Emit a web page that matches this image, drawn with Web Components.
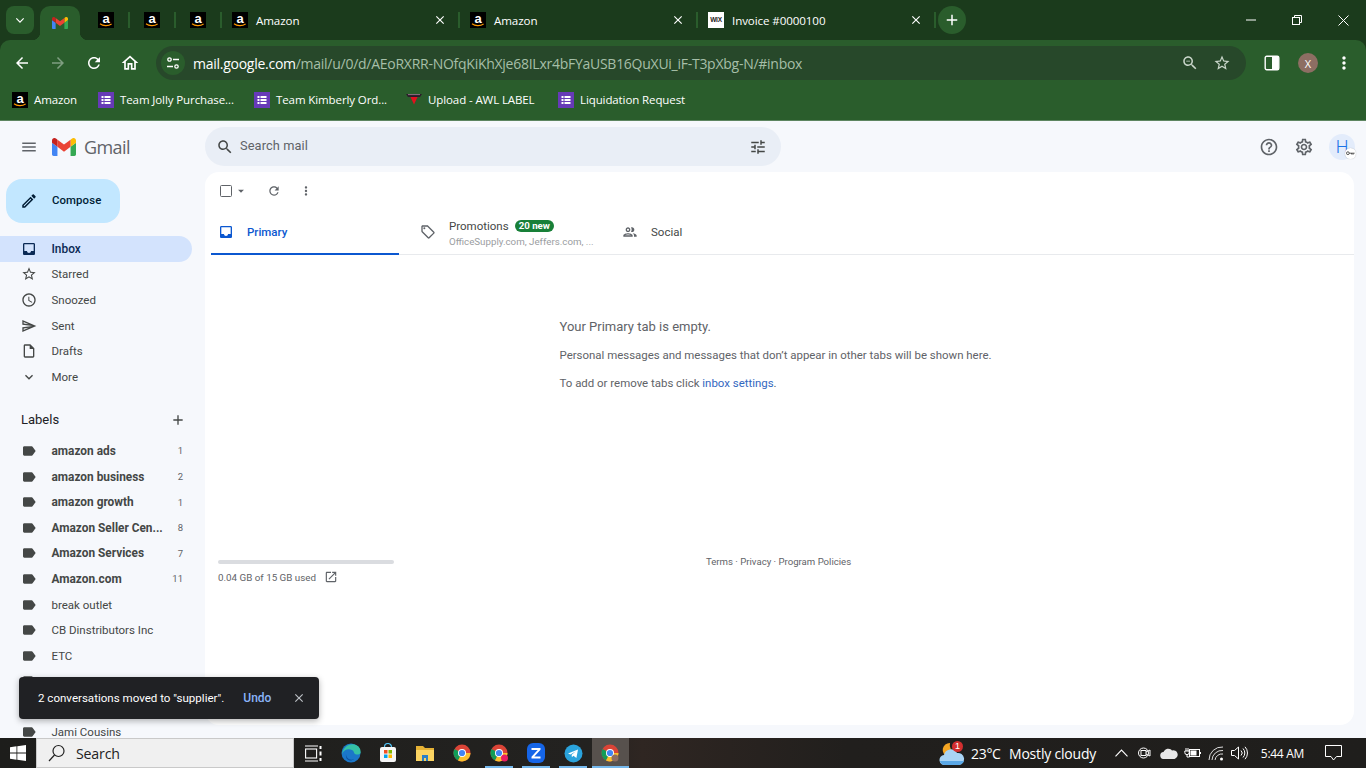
<!DOCTYPE html>
<html lang="en"><head><meta charset="utf-8"><title>Gmail</title>
<style>
html,body{margin:0;padding:0;width:1366px;height:768px;overflow:hidden;background:#1b3b1c}
x-app{display:flex}
</style></head><body>
<x-app></x-app>
<script>
const P={
menu:'M3 18h18v-2H3v2zm0-5h18v-2H3v2zm0-7v2h18V6H3z',
search:'M15.5 14h-.79l-.28-.27C15.41 12.59 16 11.11 16 9.5 16 5.91 13.09 3 9.5 3S3 5.91 3 9.5 5.91 16 9.5 16c1.61 0 3.09-.59 4.23-1.57l.27.28v.79l5 4.99L20.49 19l-4.99-5zm-6 0C7.01 14 5 11.99 5 9.5S7.01 5 9.5 5 14 7.01 14 9.5 11.99 14 9.5 14z',
tune:'M3 17v2h6v-2H3zM3 5v2h10V5H3zm10 16v-2h8v-2h-8v-2h-2v6h2zM7 9v2H3v2h4v2h2V9H7zm14 4v-2H11v2h10zm-6-4h2V7h4V5h-4V3h-2v6z',
help:'M11 18h2v-2h-2v2zm1-16C6.48 2 2 6.48 2 12s4.48 10 10 10 10-4.48 10-10S17.52 2 12 2zm0 18c-4.41 0-8-3.59-8-8s3.59-8 8-8 8 3.59 8 8-3.59 8-8 8zm0-14c-2.21 0-4 1.79-4 4h2c0-1.1.9-2 2-2s2 .9 2 2c0 2-3 1.75-3 5h2c0-2.25 3-2.5 3-5 0-2.21-1.79-4-4-4z',
gear:'M19.43 12.98c.04-.32.07-.64.07-.98 0-.34-.03-.66-.07-.98l2.11-1.65c.19-.15.24-.42.12-.64l-2-3.46c-.09-.16-.26-.25-.44-.25-.06 0-.12.01-.17.03l-2.49 1c-.52-.4-1.08-.73-1.69-.98l-.38-2.65C14.46 2.18 14.25 2 14 2h-4c-.25 0-.46.18-.49.42l-.38 2.65c-.61.25-1.17.59-1.69.98l-2.49-1c-.06-.02-.12-.03-.18-.03-.17 0-.34.09-.43.25l-2 3.46c-.13.22-.07.49.12.64l2.11 1.65c-.04.32-.07.65-.07.98 0 .33.03.66.07.98l-2.11 1.65c-.19.15-.24.42-.12.64l2 3.46c.09.16.26.25.44.25.06 0 .12-.01.17-.03l2.49-1c.52.4 1.08.73 1.69.98l.38 2.65c.03.24.24.42.49.42h4c.25 0 .46-.18.49-.42l.38-2.65c.61-.25 1.17-.59 1.69-.98l2.49 1c.06.02.12.03.18.03.17 0 .34-.09.43-.25l2-3.46c.12-.22.07-.49-.12-.64l-2.11-1.65zm-1.98-1.71c.04.31.05.52.05.73 0 .21-.02.43-.05.73l-.14 1.13.89.7 1.08.84-.7 1.21-1.27-.51-1.04-.42-.9.68c-.43.32-.84.56-1.25.73l-1.06.43-.16 1.13-.2 1.35h-1.4l-.19-1.35-.16-1.13-1.06-.43c-.43-.18-.83-.41-1.23-.71l-.91-.7-1.06.43-1.27.51-.7-1.21 1.08-.84.89-.7-.14-1.13c-.03-.31-.05-.54-.05-.74s.02-.43.05-.73l.14-1.13-.89-.7-1.08-.84.7-1.21 1.27.51 1.04.42.9-.68c.43-.32.84-.56 1.25-.73l1.06-.43.16-1.13.2-1.35h1.39l.19 1.35.16 1.13 1.06.43c.43.18.83.41 1.23.71l.91.7 1.06-.43 1.27-.51.7 1.21-1.07.85-.89.7.14 1.13zM12 8c-2.21 0-4 1.79-4 4s1.79 4 4 4 4-1.79 4-4-1.79-4-4-4zm0 6c-1.1 0-2-.9-2-2s.9-2 2-2 2 .9 2 2-.9 2-2 2z',
inbox:'M19 3H4.99c-1.11 0-1.98.89-1.98 2L3 19c0 1.1.88 2 1.99 2H19c1.1 0 2-.9 2-2V5c0-1.11-.9-2-2-2zm0 12h-4c0 1.66-1.35 3-3 3s-3-1.34-3-3H4.99V5H19v10z',
star:'M22 9.24l-7.19-.62L12 2 9.19 8.63 2 9.24l5.46 4.73L5.82 21 12 17.27 18.18 21l-1.63-7.03L22 9.24zM12 15.4l-3.76 2.27 1-4.28-3.32-2.88 4.38-.38L12 6.1l1.71 4.04 4.38.38-3.32 2.88 1 4.28L12 15.4z',
clock:'M11.99 2C6.47 2 2 6.48 2 12s4.47 10 9.99 10C17.52 22 22 17.52 22 12S17.52 2 11.99 2zM12 20c-4.42 0-8-3.58-8-8s3.58-8 8-8 8 3.58 8 8-3.58 8-8 8zm.5-13H11v6l5.25 3.15.75-1.23-4.5-2.67z',
send:'M4.01 6.03l7.51 3.22-7.52-1 .01-2.22m7.5 8.72L4 17.97v-2.22l7.51-1M2.01 3L2 10l15 2-15 2 .01 7L23 12 2.01 3z',
draft:'M14 2H6c-1.1 0-1.99.9-1.99 2L4 20c0 1.1.89 2 1.99 2H18c1.1 0 2-.9 2-2V8l-6-6zm4 18H6V4h7v5h5v11z',
more:'M16.59 8.59L12 13.17 7.41 8.59 6 10l6 6 6-6z',
label:'M17.63 5.84C17.27 5.33 16.67 5 16 5L5 5.01C3.9 5.01 3 5.9 3 7v10c0 1.1.9 1.99 2 1.99L16 19c.67 0 1.27-.33 1.63-.84L22 12l-4.37-6.16z',
plus:'M19 13h-6v6h-2v-6H5v-2h6V5h2v6h6v2z',
close:'M19 6.41L17.59 5 12 10.59 6.41 5 5 6.41 10.59 12 5 17.59 6.41 19 12 13.41 17.59 19 19 17.59 13.41 12z',
refresh:'M17.65 6.35C16.2 4.9 14.21 4 12 4c-4.42 0-7.99 3.58-7.99 8s3.57 8 7.99 8c3.73 0 6.84-2.55 7.73-6h-2.08c-.82 2.33-3.04 4-5.65 4-3.31 0-6-2.69-6-6s2.69-6 6-6c1.66 0 3.14.69 4.22 1.78L13 11h7V4l-2.35 2.35z',
vert:'M12 8c1.1 0 2-.9 2-2s-.9-2-2-2-2 .9-2 2 .9 2 2 2zm0 2c-1.1 0-2 .9-2 2s.9 2 2 2 2-.9 2-2-.9-2-2-2zm0 6c-1.1 0-2 .9-2 2s.9 2 2 2 2-.9 2-2-.9-2-2-2z',
tag:'M21.41 11.58l-9-9C12.05 2.22 11.55 2 11 2H4c-1.1 0-2 .9-2 2v7c0 .55.22 1.05.59 1.42l9 9c.36.36.86.58 1.41.58s1.05-.22 1.41-.59l7-7c.37-.36.59-.86.59-1.41s-.23-1.06-.59-1.42zM13 20.01L4 11V4h7v-.01l9 9-7 7.02zM6.5 5A1.5 1.5 0 1 0 6.5 8 1.5 1.5 0 1 0 6.5 5z',
people:'M9 13.75c-2.34 0-7 1.17-7 3.5V19h14v-1.75c0-2.33-4.66-3.5-7-3.5zM4.34 17c.84-.58 2.87-1.25 4.66-1.25s3.82.67 4.66 1.25H4.34zM9 12c1.93 0 3.5-1.57 3.5-3.5S10.93 5 9 5 5.5 6.57 5.5 8.5 7.07 12 9 12zm0-5c.83 0 1.5.67 1.5 1.5S9.83 10 9 10s-1.5-.67-1.5-1.5S8.17 7 9 7zm7.04 6.81c1.16.84 1.96 1.96 1.96 3.44V19h4v-1.75c0-2.02-3.5-3.17-5.96-3.44zM15 12c1.93 0 3.5-1.57 3.5-3.5S16.93 5 15 5c-.54 0-1.04.13-1.5.35.63.89 1 1.98 1 3.15s-.37 2.26-1 3.15c.46.22.96.35 1.5.35z',
open:'M19 19H5V5h7V3H5c-1.11 0-2 .9-2 2v14c0 1.1.89 2 2 2h14c1.1 0 2-.9 2-2v-7h-2v7zM14 3v2h3.59l-9.83 9.83 1.41 1.41L19 6.41V10h2V3h-7z',
pencil:'M14.06 9.02l.92.92L5.92 19H5v-.92l9.06-9.06M17.66 3c-.25 0-.51.1-.7.29l-1.83 1.83 3.75 3.75 1.83-1.83c.39-.39.39-1.02 0-1.41l-2.34-2.34c-.2-.2-.45-.29-.71-.29zm-3.6 3.19L3 17.25V21h3.75L17.81 9.94l-3.75-3.75z',
back:'M20 11H7.83l5.59-5.59L12 4l-8 8 8 8 1.41-1.41L7.83 13H20v-2z',
fwd:'M12 4l-1.41 1.41L16.17 11H4v2h12.17l-5.58 5.59L12 20l8-8z',
home:'M12 5.69l5 4.5V18h-2v-6H9v6H7v-7.81l5-4.5M12 3L2 12h3v8h6v-6h2v6h6v-8h3L12 3z',
down:'M7 10l5 5 5-5z',
chev:'M6.4 8.6L12 14.2l5.6-5.6L19 10l-7 7-7-7z',
zoomout:'M15.5 14h-.79l-.28-.27C15.41 12.59 16 11.11 16 9.5 16 5.91 13.09 3 9.5 3S3 5.91 3 9.5 5.91 16 9.5 16c1.61 0 3.09-.59 4.23-1.57l.27.28v.79l5 4.99L20.49 19l-4.99-5zm-6 0C7.01 14 5 11.99 5 9.5S7.01 5 9.5 5 14 7.01 14 9.5 11.99 14 9.5 14zM7 9h5v1H7z'
};
const GMAIL='<svg xmlns="http://www.w3.org/2000/svg" viewBox="52 42 88 66" width="100%" height="100%" style="display:block"><path fill="#4285f4" d="M58 108h14V74L52 59v43c0 3.32 2.69 6 6 6"/><path fill="#34a853" d="M120 108h14c3.32 0 6-2.69 6-6V59l-20 15"/><path fill="#fbbc04" d="M120 48v26l20-15v-8c0-7.42-8.47-11.65-14.4-7.2"/><path fill="#ea4335" d="M72 74V48l24 18 24-18v26L96 92"/><path fill="#c5221f" d="M52 51v8l20 15V48l-5.6-4.2c-5.94-4.45-14.4-.22-14.4 7.2"/></svg>';
const CHROME_UI='"Open Sans","Noto Sans",sans-serif';

function def(name,render){
  customElements.define(name,class extends HTMLElement{
    connectedCallback(){
      if(this.shadowRoot)return;
      const s=this.attachShadow({mode:'open'});
      s.innerHTML=render(this);
    }
  });
}
const A=(h,n,d='')=>h.hasAttribute(n)?h.getAttribute(n):d;

def('x-icon',h=>{
  const size=A(h,'size','16'),c=A(h,'color','currentColor');
  return `<style>:host{display:inline-flex;flex:none;width:${size}px;height:${size}px}svg{display:block}</style>
  <svg xmlns="http://www.w3.org/2000/svg" viewBox="0 0 24 24" width="${size}" height="${size}" fill="${c}"><path fill-rule="evenodd" d="${P[A(h,'name')]||''}"/></svg>`;
});
def('x-fav-amazon',h=>`<style>:host{display:inline-flex;flex:none;width:16px;height:16px;background:#000;position:relative}
  span{font:700 13px/14px "Liberation Sans",sans-serif;color:#fff;width:16px;height:14px;text-align:center;display:block}
  svg{position:absolute;left:1px;bottom:1px}</style><span>a</span>
  <svg width="14" height="4" viewBox="0 0 14 4"><path d="M1 .8C4 3 9 3.4 12.6 1" fill="none" stroke="#f90" stroke-width="1.1"/></svg>`);
def('x-fav-forms',h=>`<style>:host{display:inline-flex;flex:none;width:16px;height:16px}svg{display:block}</style>
  <svg width="16" height="16" viewBox="0 0 16 16"><rect width="16" height="16" fill="#673ab7"/><g fill="#fff"><rect x="3.5" y="4" width="2" height="2"/><rect x="3.5" y="7" width="2" height="2"/><rect x="3.5" y="10" width="2" height="2"/><rect x="6.5" y="4" width="6" height="2"/><rect x="6.5" y="7" width="6" height="2"/><rect x="6.5" y="10" width="6" height="2"/></g></svg>`);
def('x-fav-wix',h=>`<style>:host{display:inline-flex;flex:none;width:16px;height:16px;background:#fff;align-items:center;justify-content:center}
  span{font:900 6.5px/1 "Liberation Sans",sans-serif;color:#222;letter-spacing:-.2px}</style><span>WIX</span>`);
def('x-fav-upload',h=>`<style>:host{display:inline-flex;flex:none;width:16px;height:16px}svg{display:block}</style>
  <svg width="16" height="16" viewBox="0 0 16 16"><path d="M0 2h16l-2 3H2z" fill="#2b1c2a"/><path d="M2 2.6h12" stroke="#b9a" stroke-width=".7"/><path d="M4.5 5h7L8 12.5z" fill="#e3101e"/></svg>`);

def('x-tab',h=>{
  const w=A(h,'width','238');
  const pinned=h.hasAttribute('pinned');
  return `<style>:host{display:flex;align-items:center;box-sizing:border-box;width:${w}px;height:40px;position:relative;font:11.6px ${CHROME_UI};color:#fff;${pinned?'justify-content:center;':'padding:0 10px 0 11px;'}}
  :host::after{content:"";position:absolute;right:-1px;top:12px;width:2px;height:16px;background:#2a5d2c}
  .t{flex:1;margin-left:8px;white-space:nowrap;letter-spacing:-.1px}
  x-icon{margin-right:2px}</style>
  <slot name="fav"></slot>${pinned?'':'<span class="t"><slot></slot></span><x-icon name="close" size="14" color="#fff"></x-icon>'}`;
});
def('x-tabstrip',h=>`<style>:host{display:flex;height:40px;background:#1b3b1c;position:relative;align-items:flex-start;flex:none}
  .chev{width:28px;height:28px;margin:6px 6px 0 6px;background:#2a5d2c;border-radius:8px;display:flex;align-items:center;justify-content:center;flex:none;color:#fff}
  .active{width:40px;height:34px;margin-top:6px;background:#2a5d2c;border-radius:10px 10px 0 0;display:flex;align-items:center;justify-content:center;position:relative;flex:none;margin-right:3px}
  .active::before,.active::after{content:"";position:absolute;bottom:0;width:8px;height:8px}
  .active::before{left:-8px;background:radial-gradient(circle at 0 0,transparent 8px,#2a5d2c 8.5px)}
  .active::after{right:-8px;background:radial-gradient(circle at 100% 0,transparent 8px,#2a5d2c 8.5px)}
  .logo{width:16px;height:12px}
  .tabs{display:flex}
  .new{width:28px;height:28px;border-radius:50%;background:#2a5d2c;margin:6px 0 0 3px;display:flex;align-items:center;justify-content:center;flex:none}
  .win{margin-left:auto;display:flex;height:40px}
  .win span{width:46px;height:40px;display:flex;align-items:center;justify-content:center}
  svg{display:block}</style>
  <div class="chev"><x-icon name="chev" size="14" color="#fff"></x-icon></div>
  <div class="active"><div class="logo">${GMAIL}</div></div>
  <div class="tabs"><slot></slot></div>
  <div class="new"><x-icon name="plus" size="18" color="#fff"></x-icon></div>
  <div class="win">
   <span><svg width="10" height="10" viewBox="0 0 10 10"><path d="M0 5h10" stroke="#fff"/></svg></span>
   <span><svg width="10" height="10" viewBox="0 0 10 10" fill="none" stroke="#fff"><rect x=".5" y="2.5" width="7" height="7"/><path d="M2.5 2.5V.5h7v7H7.5"/></svg></span>
   <span><svg width="11" height="11" viewBox="0 0 11 11" stroke="#fff" stroke-width="1"><path d="M.5.5l10 10M10.5.5l-10 10"/></svg></span>
  </div>`);
def('x-toolbar',h=>`<style>:host{display:flex;align-items:center;height:42px;flex:none;background:#2a5d2c;border-radius:10px 10px 0 0;box-sizing:border-box;padding-top:4px;position:relative;font-family:${CHROME_UI}}
  .b{width:36px;height:34px;display:flex;align-items:center;justify-content:center;flex:none}
  .nav{display:flex;margin-left:4px}
  .omni{flex:none;width:1090px;height:34px;margin-left:8px;background:#27482a;border-radius:17px;display:flex;align-items:center;box-sizing:border-box}
  .chip{width:24px;height:24px;border-radius:50%;background:#2a5d2c;margin-left:5px;display:flex;align-items:center;justify-content:center;flex:none}
  .url{margin-left:8px;font-size:14px;color:#a6bfa8;white-space:nowrap;flex:1;letter-spacing:-.264px}
  .url b{font-weight:400;color:#fff}
  .end{display:flex;align-items:center;gap:14px;margin-right:15px;color:#c9d6ca}
  .right{display:flex;margin-left:8px}
  .av{width:20px;height:20px;border-radius:50%;background:#8d6e63;color:#fff;font-size:11px;display:flex;align-items:center;justify-content:center}
  svg{display:block}</style>
  <div class="nav"><div class="b"><x-icon name="back" size="18" color="#fff"></x-icon></div><div class="b"><x-icon name="fwd" size="18" color="#7f9e81"></x-icon></div><div class="b"><x-icon name="refresh" size="18" color="#fff"></x-icon></div><div class="b"><x-icon name="home" size="20" color="#fff"></x-icon></div></div>
  <div class="omni"><div class="chip"><svg width="14" height="14" viewBox="0 0 14 14" fill="none" stroke="#fff" stroke-width="1.3"><circle cx="3.5" cy="3.5" r="1.7"/><path d="M7 3.5h6M1 10.5h6"/><circle cx="10.5" cy="10.5" r="1.7"/></svg></div>
   <div class="url"><b>mail.google.com</b>/mail/u/0/d/AEoRXRR-NOfqKiKhXje68ILxr4bFYaUSB16QuXUi_iF-T3pXbg-N/#inbox</div>
   <div class="end"><x-icon name="zoomout" size="18" color="#c9d6ca"></x-icon><x-icon name="star" size="18" color="#c9d6ca"></x-icon></div></div>
  <div class="right"><div class="b"><svg width="16" height="16" viewBox="0 0 16 16"><rect x="1.200" y="1.200" width="13.600" height="13.600" rx="1.500" fill="none" stroke="#fff" stroke-width="1.400"/><rect x="8" y="1.500" width="6.500" height="13" fill="#fff"/></svg></div>
   <div class="b"><div class="av">X</div></div><div class="b"><x-icon name="vert" size="20" color="#fff"></x-icon></div></div>`);
def('x-bookmark',h=>`<style>:host{display:flex;align-items:center;gap:6px;font:11.5px/16px ${CHROME_UI};color:#fff;white-space:nowrap;letter-spacing:-.1px;width:${A(h,'width','100')}px;flex:none}</style><slot name="fav"></slot><slot></slot>`);
def('x-bookmarks',h=>`<style>:host{display:flex;align-items:center;height:36px;padding-bottom:2px;flex:none;background:#2a5d2c;border-bottom:1px solid #5d8560;padding-left:12px}</style><slot></slot>`);

def('x-gheader',h=>`<style>:host{display:flex;align-items:center;height:51px;flex:none;font-family:Roboto,sans-serif;color:#444746;box-sizing:border-box;padding-top:1px}
  .left{width:205px;display:flex;align-items:center;flex:none}
  .mn{margin-left:20px;display:flex}
  .logo{width:24px;height:18px;margin-left:14px}
  .word{font:500 18px/1 "Open Sans",sans-serif;color:#5f6368;margin-left:8px;letter-spacing:-.6px}
  .search{width:576px;height:39px;margin-top:-1px;border-radius:20px;background:#e9eef6;display:flex;align-items:center;box-sizing:border-box;padding:0 14px 0 11px;flex:none}
  .search span{margin-left:6px;font-size:12.8px;color:#5f6368;flex:1;letter-spacing:.1px;padding-bottom:2px}
  .r{margin-left:auto;display:flex;align-items:center;margin-right:11px}
  .av{width:26px;height:26px;border-radius:50%;background:#e3ecfb;color:#1a73e8;font:300 18px/26px Roboto,sans-serif;text-align:center;position:relative;margin-left:15px}
  .key{position:absolute;right:-1px;bottom:1px;width:11px;height:11px;border-radius:50%;background:#fff;display:flex;align-items:center;justify-content:center;box-shadow:0 0 1px rgba(0,0,0,.3)}
  svg{display:block}</style>
  <div class="left"><div class="mn"><x-icon name="menu" size="18" color="#5f6368"></x-icon></div><div class="logo">${GMAIL}</div><div class="word">Gmail</div></div>
  <div class="search"><x-icon name="search" size="18" color="#444746"></x-icon><span>Search mail</span><x-icon name="tune" size="18" color="#444746"></x-icon></div>
  <div class="r"><x-icon name="help" size="20" color="#5f6368"></x-icon><span style="width:15px"></span><x-icon name="gear" size="20" color="#5f6368"></x-icon><div class="av">H<span class="key"><svg width="9" height="5" viewBox="0 0 9 5"><circle cx="1.9" cy="2.2" r="1.4" fill="none" stroke="#333" stroke-width=".8"/><path d="M3.3 2.2H8.6M7 2.2v1.6M5.5 2.2v1.2" stroke="#333" stroke-width=".8" fill="none"/></svg></span></div></div>`);

def('x-nav-item',h=>{
  const act=h.hasAttribute('active');
  return `<style>:host{display:flex;align-items:center;height:25.6px;width:192px;flex:none;box-sizing:border-box;padding-left:21px;font:${act?'500 11.9px':'400 11.5px'} Roboto,sans-serif;color:${act?'#0b2a55':'#444746'};${act?'background:#d3e3fd;border-radius:0 13px 13px 0;':''}}
  span{margin-left:14.5px}</style><x-icon name="${A(h,'icon')}" size="16" color="${act?'#0b2a55':'#444746'}"></x-icon><span><slot></slot></span>`;
});
def('x-label-item',h=>{
  const b=h.hasAttribute('bold');
  return `<style>:host{display:flex;align-items:center;height:25.6px;width:192px;box-sizing:border-box;padding-left:21px;font:${b?'700 11.85px':'400 11.5px'} Roboto,sans-serif;color:#444746;flex:none}
  .n{margin-left:14.5px;flex:1;white-space:nowrap}.c{font:400 9.5px Roboto,sans-serif;color:#5f6368;margin-right:9px}</style>
  <x-icon name="label" size="16" color="#444746"></x-icon><span class="n"><slot></slot></span><span class="c">${A(h,'count')}</span>`;
});
def('x-sidebar',h=>`<style>:host{display:flex;flex-direction:column;width:205px;flex:none;overflow:hidden;font-family:Roboto,sans-serif;color:#1f1f1f}
  .compose{width:114px;height:44px;margin:7px 0 13px 6px;background:#c2e7ff;border-radius:16px;display:flex;align-items:center;box-sizing:border-box;padding-left:14px;font:500 11.4px Roboto,sans-serif;color:#001d35;flex:none}
  .compose span{margin-left:14px;letter-spacing:.1px;padding-bottom:2px}
  .lab{display:flex;align-items:center;justify-content:space-between;height:26px;margin:17px 0 5.6px 0;padding:0 19px 0 21px;width:205px;box-sizing:border-box;font:400 13px Roboto,sans-serif;color:#202124;flex:none}
  svg{display:block}</style>
  <div class="compose"><x-icon name="pencil" size="18" color="#001d35"></x-icon><span>Compose</span></div>
  <slot name="nav"></slot>
  <div class="lab">Labels<x-icon name="plus" size="16" color="#444746"></x-icon></div>
  <slot></slot>`);
def('x-mail-tab',h=>{
  const act=h.hasAttribute('active');
  return `<style>:host{display:flex;align-items:center;width:${A(h,'width','188')}px;height:44px;box-sizing:border-box;padding-left:${A(h,'pad','7')}px;position:relative;flex:none;font:${act?'500':'400'} 11.5px Roboto,sans-serif;color:${act?'#0b57d0':'#444746'}}
  :host([active])::after{content:"";position:absolute;left:0;right:0;bottom:-1px;height:2px;background:#0b57d0}
  .t{margin-left:${A(h,'gap','13')}px}</style>
  <x-icon name="${A(h,'icon')}" size="16" color="${act?'#0b57d0':'#5f6368'}"></x-icon><div class="t"><slot></slot></div>`;
});
def('x-promo',h=>`<style>:host{display:block;font:400 11.5px/14px Roboto,sans-serif;color:#444746;padding-top:2px}
  .top{display:flex;align-items:center;gap:6px}
  .bd{background:#188038;color:#fff;font:700 9.7px/12px Roboto,sans-serif;border-radius:6px;padding:0 4px;height:12px}
  .s{font:400 9.75px/13px Roboto,sans-serif;color:#9a9da1;margin-top:2px}</style>
  <div class="top"><span>Promotions</span><span class="bd">20 new</span></div><div class="s">OfficeSupply.com, Jeffers.com, ...</div>`);
def('x-main',h=>`<style>:host{display:flex;flex-direction:column;background:#fff;border-radius:14px;width:1149px;height:553px;flex:none;box-sizing:border-box;font-family:Roboto,sans-serif;color:#5f6368;position:relative}
  .bar{display:flex;align-items:center;height:38px;padding-left:13px;flex:none}
  .tabs{display:flex;margin:0 0 0 6px;width:1143px;border-bottom:1px solid #e8eaed;height:44px;flex:none}
  .empty{flex:none;height:305px;box-sizing:border-box;padding:64px 0 0 354.5px;font-size:11.45px;color:#5f6368}
  .empty h4{margin:0 0 13px;font:400 13px/16px Roboto,sans-serif}
  .empty p{margin:0 0 14px;line-height:14px}
  a{color:#3367c0;text-decoration:none}
  .foot{display:flex;align-items:flex-start;padding-left:13px}
  .stor{width:176px;font:400 9.8px Roboto,sans-serif}
  .barx{height:4px;background:#dadce0;border-radius:2px}
  .u{display:flex;align-items:center;margin-top:6px;white-space:nowrap}
  .links{margin-left:312px;font:400 9.6px Roboto,sans-serif;margin-top:-4px;color:#5f6368}
  </style>
  <div class="bar">
    <span style="width:12px;height:12px;border:1.5px solid #5f6368;border-radius:1.5px;box-sizing:border-box;margin-left:2px"></span>
    <x-icon name="down" size="14" color="#5f6368" style="margin-left:2px"></x-icon>
    <x-icon name="refresh" size="14" color="#5f6368" style="margin-left:19px"></x-icon>
    <x-icon name="vert" size="14" color="#5f6368" style="margin-left:18px"></x-icon></div>
  <div class="tabs"><x-mail-tab active icon="inbox" width="188" gap="13">Primary</x-mail-tab><x-mail-tab icon="tag" width="208" pad="21" gap="13"><x-promo></x-promo></x-mail-tab><x-mail-tab icon="people" width="200" pad="15" gap="13">Social</x-mail-tab></div>
  <div class="empty"><h4>Your Primary tab is empty.</h4><p>Personal messages and messages that don’t appear in other tabs will be shown here.</p><p>To add or remove tabs click <a>inbox settings</a>.</p></div>
  <div class="foot"><div class="stor"><div class="barx"></div><div class="u">0.04 GB of 15 GB used<x-icon name="open" size="14" color="#5f6368" style="margin-left:8px"></x-icon></div></div><div class="links">Terms · Privacy · Program Policies</div></div>`);
def('x-snackbar',h=>`<style>:host{position:absolute;left:19px;bottom:49px;width:300px;height:42px;background:#202124;border-radius:4px;box-shadow:0 2px 6px rgba(0,0,0,.3);display:flex;align-items:center;box-sizing:border-box;padding-left:19px;font:400 11.55px Roboto,sans-serif;color:#fff;z-index:5}
  .u{color:#8ab4f8;font-weight:500;margin-left:19px;font-size:12px}
  x-icon{margin-left:21px}</style><span><slot></slot></span><span class="u">Undo</span><x-icon name="close" size="14" color="#bdc1c6"></x-icon>`);

const CHROME_ICON=(extra='')=>`<svg width="18" height="18" viewBox="0 0 18 18"><circle cx="9" cy="9" r="8.5" fill="#db4437"/><path d="M9 9L1.6 13.2A8.5 8.5 0 0 1 1.5 5z" fill="#0f9d58"/><path d="M9 9l-4 7.4A8.5 8.5 0 0 1 1.6 13.2z" fill="#0f9d58"/><path d="M9 9h8.5a8.5 8.5 0 0 1-12.5 7.4z" fill="#fbc02d"/><circle cx="9" cy="9" r="4" fill="#fff"/><circle cx="9" cy="9" r="3.1" fill="#4285f4"/>${extra}</svg>`;
def('x-taskbar',h=>`<style>:host{display:flex;align-items:center;height:30px;background:linear-gradient(90deg,#1d1d1b 0,#232220 43%,#2f2622 47%,#211f1d 62%,#1f1e1c 100%);flex:none;font-family:${CHROME_UI};color:#fff;position:relative;z-index:6}
  .st{width:36px;display:flex;align-items:center;justify-content:center;flex:none}
  .se{width:258px;height:30px;box-sizing:border-box;background:#f0f0f0;border:1px solid #c9c9c9;display:flex;align-items:center;padding-left:11px;color:#222;font-size:14.2px;flex:none}
  .se span{margin-left:10px;letter-spacing:-.2px}
  .it{width:37px;height:30px;display:flex;align-items:center;justify-content:center;flex:none;position:relative}
  .on::after{content:"";position:absolute;left:4.5px;right:4.5px;bottom:0;height:2px;background:#76b9ed}
  .act{background:#57514d}.act::after{left:0;right:0}
  .tv{width:38.5px}
  .tr{margin-left:auto;display:flex;align-items:center;height:30px;font-size:14px;flex:none}
  .w{position:relative;width:28px;height:26px;margin-right:4px}
  .b1{position:absolute;right:4px;top:1px;width:11px;height:11px;border-radius:50%;background:#d32f2f;font:9px/11px "Liberation Sans",sans-serif;text-align:center;color:#fff}
  .ti{display:flex;justify-content:center}
  svg{display:block}</style>
  <div class="st"><svg width="16" height="16" viewBox="0 0 16 16" fill="#fff"><path d="M0 2.2L6.5 1.3v6.3H0zM7.3 1.2L16 0v7.6H7.3zM0 8.4h6.5v6.3L0 13.8zM7.3 8.4H16V16l-8.7-1.2z"/></svg></div>
  <div class="se"><svg width="18" height="18" viewBox="0 0 18 18" fill="none" stroke="#222" stroke-width="1.2"><circle cx="10.5" cy="7" r="5.5"/><path d="M6.5 11L1 17"/></svg><span>Search</span></div>
  <div class="it tv"><svg width="17" height="17" viewBox="0 0 17 17" fill="none" stroke="#fff" stroke-width="1.1"><rect x=".6" y="4" width="11" height="9"/><path d="M0 1h13M0 16h13"/><path d="M15.5 1v3M15.5 6.5v4M15.5 13v3" stroke-width="2"/></svg></div>
  <div class="it"><svg width="20" height="20" viewBox="0 0 20 20"><circle cx="10" cy="10" r="9.5" fill="#1b77c9"/><path d="M1 11C2 4 9-.5 15 2c4 1.6 5 5.500 4.500 8-1 2-5 2-6 .5-.7-1-.5-2.500-2.500-3.500C7 5 2.500 7 1 11z" fill="#35c1a5"/><path d="M5 11c0 4 4 7 8 5-3 3-9 1.500-8-5z" fill="#0c4f9e"/></svg></div>
  <div class="it"><svg width="18" height="20" viewBox="0 0 18 20"><path d="M5.500 4a3.500 3.500 0 0 1 7 0" fill="none" stroke="#4fc3f7" stroke-width="1.200"/><rect x="1" y="4" width="16" height="15" rx="2" fill="#f6f6f6"/><rect x="5" y="7" width="3.500" height="3.500" fill="#f25022"/><rect x="9.500" y="7" width="3.500" height="3.500" fill="#7fba00"/><rect x="5" y="11.500" width="3.500" height="3.500" fill="#00a4ef"/><rect x="9.500" y="11.500" width="3.500" height="3.500" fill="#ffb900"/></svg></div>
  <div class="it"><svg width="18" height="17" viewBox="0 0 18 17"><path d="M0 1h7l2 2h9v13H0z" fill="#e5b235"/><path d="M0 5h18v11H0z" fill="#fcd462"/><rect x="6" y="10" width="6" height="6" fill="#2b7fc7"/><rect x="8" y="13" width="2" height="3" fill="#fcd462"/></svg></div>
  <div class="it">${CHROME_ICON()}</div>
  <div class="it on">${CHROME_ICON('<circle cx="14.500" cy="14" r="3.500" fill="#e91e63"/>')}</div>
  <div class="it on"><svg width="20" height="20" viewBox="0 0 20 20"><rect x="1" y="0" width="18" height="20" rx="6" fill="#1565e8"/><path d="M5.500 5h9v1.800L8.300 13.500h6.200V15.500h-9v-1.800l6.200-6.700H5.500z" fill="#fff"/></svg></div>
  <div class="it on"><svg width="19" height="19" viewBox="0 0 19 19"><circle cx="9.500" cy="9.500" r="9" fill="#2aa3dc"/><path d="M4 9.500l10-4-1.600 8.500-3-2.200-1.500 1.500-.3-2.500 4.300-3.600-5.500 3.300z" fill="#fff"/></svg></div>
  <div class="it on act">${CHROME_ICON('<circle cx="14" cy="14" r="3.500" fill="#8d6e63"/>')}</div>
  <div class="tr">
    <div class="w"><svg width="26" height="24" viewBox="0 0 26 24" style="position:absolute;left:0;top:2px"><path d="M11 1a7 7 0 1 0 6 10A8 8 0 0 1 11 1z" fill="#f5a623"/><path d="M6 23a5 5 0 0 1-1-10 7 7 0 0 1 13-2 6 6 0 0 1 2 12z" fill="#a9d4f5"/><path d="M6 23h14a6 6 0 0 0 5-4H1a5 5 0 0 0 5 4z" fill="#5ba8e6"/></svg><span class="b1">1</span></div>
    <span style="width:38px;letter-spacing:-.3px">23°C</span><span style="width:100px;letter-spacing:-.2px;white-space:nowrap">Mostly cloudy</span>
    <span class="ti" style="width:24px"><svg width="13" height="8" viewBox="0 0 13 8" fill="none" stroke="#fff" stroke-width="1.100"><path d="M.5 7.300L6.500 1l6 6.300"/></svg></span>
    <span class="ti" style="width:24px"><svg width="14" height="16" viewBox="0 0 14 16" fill="none" stroke="#fff"><circle cx="5.500" cy="8" r="5"/><rect x="3" y="5.500" width="5" height="5" fill="#201f1d"/><path d="M8 7l4-2v6l-4-2"/></svg></span>
    <span class="ti" style="width:23px"><svg width="18" height="11" viewBox="0 0 18 11" fill="#e8e8e8"><path d="M4 11a3.500 3.500 0 0 1-.5-7A5 5 0 0 1 12 2.500 4 4 0 0 1 14.500 11z"/></svg></span>
    <span class="ti" style="width:24px"><svg width="17" height="12" viewBox="0 0 17 12" fill="none" stroke="#fff"><rect x="5.500" y="2.500" width="10" height="7"/><rect x="6.500" y="3.500" width="6" height="5" fill="#fff" stroke="none"/><path d="M16.500 5v2M2 1v3M4 1v3M.8 4h4.400v1.500a2 2 0 0 1-4.400 0zM3 7v3h2.500"/></svg></span>
    <span class="ti" style="width:25px"><svg width="17" height="15" viewBox="0 0 17 15" fill="none" stroke="#ddd" stroke-width="1"><path d="M1 14A13 13 0 0 1 15 1M4 14A10 10 0 0 1 15 4.500M7 14A7 7 0 0 1 15 8"/><circle cx="13.500" cy="13" r="1.500" fill="#fff" stroke="none"/></svg></span>
    <span class="ti" style="width:20px"><svg width="17" height="14" viewBox="0 0 17 14" fill="none" stroke="#fff"><path d="M.5 4.500h3L7.500 1v12l-4-3.500h-3z"/><path d="M10 4.500a3.500 3.500 0 0 1 0 5M12 2.500a6.500 6.500 0 0 1 0 9M14 .8a9 9 0 0 1 0 12.400"/></svg></span>
    <span style="width:55px;text-align:right;font-size:12px;white-space:nowrap;letter-spacing:-.3px">5:44 AM</span>
    <span class="ti" style="width:58px;margin-right:4px"><svg width="17" height="16" viewBox="0 0 17 16" fill="none" stroke="#fff"><path d="M.5.500h16v11h-5L8.500 15 6 11.500H.5z"/></svg></span>
  </div>`);
def('x-app',h=>`<style>:host{display:flex;flex-direction:column;width:1366px;height:768px;position:relative;overflow:hidden;background:#1b3b1c}
  .body{flex:1;min-height:0;display:flex;flex-direction:column;overflow:hidden;background:#f6f8fc}
  .row{display:flex;flex:1;min-height:0}
  </style>
  <x-tabstrip>
    <x-tab pinned width="46"><x-fav-amazon slot="fav"></x-fav-amazon></x-tab>
    <x-tab pinned width="46"><x-fav-amazon slot="fav"></x-fav-amazon></x-tab>
    <x-tab pinned width="46"><x-fav-amazon slot="fav"></x-fav-amazon></x-tab>
    <x-tab><x-fav-amazon slot="fav"></x-fav-amazon>Amazon</x-tab>
    <x-tab><x-fav-amazon slot="fav"></x-fav-amazon>Amazon</x-tab>
    <x-tab><x-fav-wix slot="fav"></x-fav-wix>Invoice #0000100</x-tab>
  </x-tabstrip>
  <x-toolbar></x-toolbar>
  <x-bookmarks>
    <x-bookmark width="86"><x-fav-amazon slot="fav"></x-fav-amazon>Amazon</x-bookmark>
    <x-bookmark width="156"><x-fav-forms slot="fav"></x-fav-forms>Team Jolly Purchase...</x-bookmark>
    <x-bookmark width="152"><x-fav-forms slot="fav"></x-fav-forms>Team Kimberly Ord...</x-bookmark>
    <x-bookmark width="152"><x-fav-upload slot="fav"></x-fav-upload>Upload - AWL LABEL</x-bookmark>
    <x-bookmark width="150"><x-fav-forms slot="fav"></x-fav-forms>Liquidation Request</x-bookmark>
  </x-bookmarks>
  <div class="body">
    <x-gheader></x-gheader>
    <div class="row">
      <x-sidebar>
        <x-nav-item slot="nav" active icon="inbox">Inbox</x-nav-item>
        <x-nav-item slot="nav" icon="star">Starred</x-nav-item>
        <x-nav-item slot="nav" icon="clock">Snoozed</x-nav-item>
        <x-nav-item slot="nav" icon="send">Sent</x-nav-item>
        <x-nav-item slot="nav" icon="draft">Drafts</x-nav-item>
        <x-nav-item slot="nav" icon="more">More</x-nav-item>
        <x-label-item bold count="1">amazon ads</x-label-item>
        <x-label-item bold count="2">amazon business</x-label-item>
        <x-label-item bold count="1">amazon growth</x-label-item>
        <x-label-item bold count="8">Amazon Seller Cen...</x-label-item>
        <x-label-item bold count="7">Amazon Services</x-label-item>
        <x-label-item bold count="11">Amazon.com</x-label-item>
        <x-label-item>break outlet</x-label-item>
        <x-label-item>CB Dinstributors Inc</x-label-item>
        <x-label-item>ETC</x-label-item>
        <x-label-item></x-label-item>
        <x-label-item></x-label-item>
        <x-label-item>Jami Cousins</x-label-item>
      </x-sidebar>
      <x-main></x-main>
    </div>
  </div>
  <x-snackbar>2 conversations moved to "supplier".</x-snackbar>
  <x-taskbar></x-taskbar>`);
</script>
</body></html>
